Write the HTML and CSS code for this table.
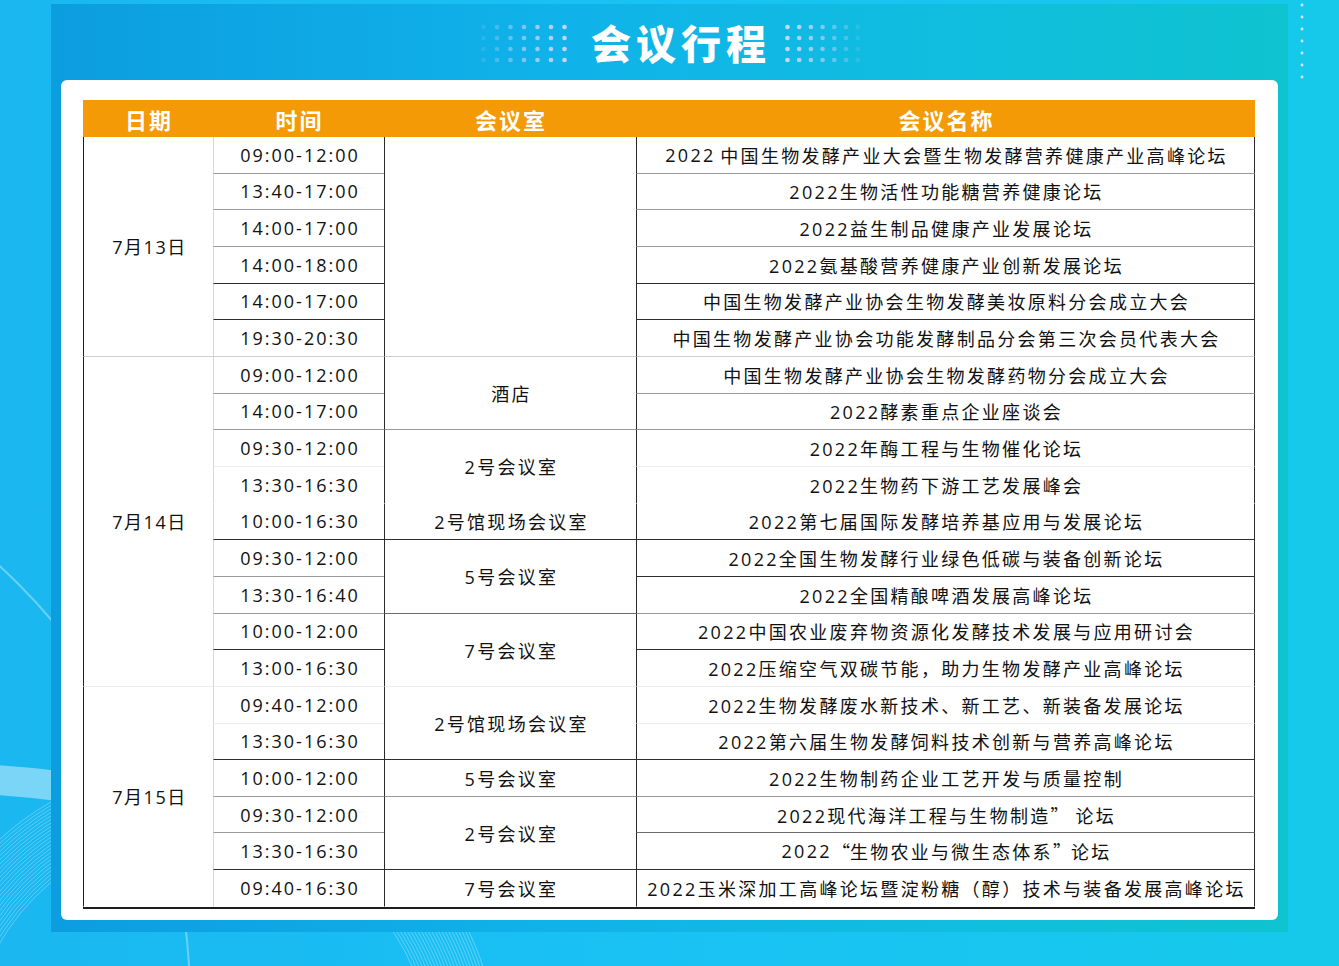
FILE: index.html
```html
<!DOCTYPE html>
<html lang="zh">
<head>
<meta charset="utf-8">
<title>会议行程</title>
<link rel="stylesheet" href="styles.css">
</head>
<body>
<div class="page">
  <svg class="deco" width="1339" height="966" viewBox="0 0 1339 966">
    <path d="M -20 779 Q 150 788 330 850" stroke="#ffffff" stroke-opacity="0.42" stroke-width="30" fill="none"/>
    <g fill="none" stroke="#ffffff" stroke-opacity="0.3" stroke-width="1">
      <circle cx="200" cy="1060" r="232"/><circle cx="200" cy="1060" r="235"/><circle cx="200" cy="1060" r="238"/>
      <circle cx="200" cy="1060" r="241"/><circle cx="200" cy="1060" r="244"/><circle cx="200" cy="1060" r="247"/>
      <circle cx="200" cy="1060" r="250"/><circle cx="200" cy="1060" r="253"/><circle cx="200" cy="1060" r="256"/>
      <circle cx="200" cy="1060" r="259"/><circle cx="200" cy="1060" r="262"/><circle cx="200" cy="1060" r="265"/>
      <circle cx="200" cy="1060" r="268"/><circle cx="200" cy="1060" r="271"/><circle cx="200" cy="1060" r="274"/>
      <circle cx="200" cy="1060" r="277"/><circle cx="200" cy="1060" r="280"/><circle cx="200" cy="1060" r="283"/>
      <circle cx="200" cy="1060" r="286"/><circle cx="200" cy="1060" r="289"/><circle cx="200" cy="1060" r="292"/>
      <circle cx="200" cy="1060" r="295"/><circle cx="200" cy="1060" r="298"/>
    </g>
    <circle cx="-400" cy="1000" r="590" fill="none" stroke="#ffffff" stroke-opacity="0.35" stroke-width="2"/>
    <g fill="#d4ecf6">
      <circle cx="1302" cy="5" r="1.4"/><circle cx="1302" cy="17" r="1.4"/><circle cx="1302" cy="29" r="1.4"/>
      <circle cx="1302" cy="41" r="1.4"/><circle cx="1302" cy="53" r="1.4"/><circle cx="1302" cy="65" r="1.4"/>
      <circle cx="1302" cy="77" r="1.4"/>
    </g>
  </svg>

  <div class="panel">
    <div class="title-row">
      <svg class="dots" width="86" height="40" viewBox="0 0 86 40">
        <g fill="#cbd5fb">
          <g opacity="0.15"><circle cx="2.5" cy="5" r="2.3"/><circle cx="2.5" cy="16" r="2.3"/><circle cx="2.5" cy="27" r="2.3"/><circle cx="2.5" cy="38" r="2.3"/></g>
          <g opacity="0.3"><circle cx="16" cy="5" r="2.3"/><circle cx="16" cy="16" r="2.3"/><circle cx="16" cy="27" r="2.3"/><circle cx="16" cy="38" r="2.3"/></g>
          <g opacity="0.45"><circle cx="29.5" cy="5" r="2.3"/><circle cx="29.5" cy="16" r="2.3"/><circle cx="29.5" cy="27" r="2.3"/><circle cx="29.5" cy="38" r="2.3"/></g>
          <g opacity="0.6"><circle cx="43" cy="5" r="2.3"/><circle cx="43" cy="16" r="2.3"/><circle cx="43" cy="27" r="2.3"/><circle cx="43" cy="38" r="2.3"/></g>
          <g opacity="0.75"><circle cx="56.5" cy="5" r="2.3"/><circle cx="56.5" cy="16" r="2.3"/><circle cx="56.5" cy="27" r="2.3"/><circle cx="56.5" cy="38" r="2.3"/></g>
          <g opacity="0.88"><circle cx="70" cy="5" r="2.3"/><circle cx="70" cy="16" r="2.3"/><circle cx="70" cy="27" r="2.3"/><circle cx="70" cy="38" r="2.3"/></g>
          <g opacity="1"><circle cx="83.5" cy="5" r="2.3"/><circle cx="83.5" cy="16" r="2.3"/><circle cx="83.5" cy="27" r="2.3"/><circle cx="83.5" cy="38" r="2.3"/></g>
        </g>
      </svg>
      <h1 class="title">会议行程</h1>
      <svg class="dots dots-right" width="76" height="40" viewBox="0 0 76 40">
        <g fill="#cbd5fb">
          <g opacity="1"><circle cx="2.5" cy="5" r="2.3"/><circle cx="2.5" cy="16" r="2.3"/><circle cx="2.5" cy="27" r="2.3"/><circle cx="2.5" cy="38" r="2.3"/></g>
          <g opacity="0.88"><circle cx="14.2" cy="5" r="2.3"/><circle cx="14.2" cy="16" r="2.3"/><circle cx="14.2" cy="27" r="2.3"/><circle cx="14.2" cy="38" r="2.3"/></g>
          <g opacity="0.75"><circle cx="25.9" cy="5" r="2.3"/><circle cx="25.9" cy="16" r="2.3"/><circle cx="25.9" cy="27" r="2.3"/><circle cx="25.9" cy="38" r="2.3"/></g>
          <g opacity="0.6"><circle cx="37.6" cy="5" r="2.3"/><circle cx="37.6" cy="16" r="2.3"/><circle cx="37.6" cy="27" r="2.3"/><circle cx="37.6" cy="38" r="2.3"/></g>
          <g opacity="0.45"><circle cx="49.3" cy="5" r="2.3"/><circle cx="49.3" cy="16" r="2.3"/><circle cx="49.3" cy="27" r="2.3"/><circle cx="49.3" cy="38" r="2.3"/></g>
          <g opacity="0.3"><circle cx="61" cy="5" r="2.3"/><circle cx="61" cy="16" r="2.3"/><circle cx="61" cy="27" r="2.3"/><circle cx="61" cy="38" r="2.3"/></g>
          <g opacity="0.15"><circle cx="72.7" cy="5" r="2.3"/><circle cx="72.7" cy="16" r="2.3"/><circle cx="72.7" cy="27" r="2.3"/><circle cx="72.7" cy="38" r="2.3"/></g>
        </g>
      </svg>
    </div>

    <div class="card">
      <div class="schedule">
        <div class="hd">日期</div>
        <div class="hd">时间</div>
        <div class="hd">会议室</div>
        <div class="hd">会议名称</div>

        <!-- 1 -->
        <div class="c date s6 bl">7月13日</div>
        <div class="c time bg">09:00-12:00</div>
        <div class="c room s6 bl"></div>
        <div class="c name bg">2022<span class="sp"> </span>中国生物发酵产业大会暨生物发酵营养健康产业高峰论坛</div>
        <!-- 2 -->
        <div class="c time bg">13:40-17:00</div>
        <div class="c name bg">2022生物活性功能糖营养健康论坛</div>
        <!-- 3 -->
        <div class="c time bg">14:00-17:00</div>
        <div class="c name bg">2022益生制品健康产业发展论坛</div>
        <!-- 4 -->
        <div class="c time bd">14:00-18:00</div>
        <div class="c name bd">2022氨基酸营养健康产业创新发展论坛</div>
        <!-- 5 -->
        <div class="c time bd">14:00-17:00</div>
        <div class="c name bd">中国生物发酵产业协会生物发酵美妆原料分会成立大会</div>
        <!-- 6 -->
        <div class="c time bl">19:30-20:30</div>
        <div class="c name bl">中国生物发酵产业协会功能发酵制品分会第三次会员代表大会</div>
        <!-- 7 -->
        <div class="c date s9 bx">7月14日</div>
        <div class="c time bg">09:00-12:00</div>
        <div class="c room s2 bg">酒店</div>
        <div class="c name bg">中国生物发酵产业协会生物发酵药物分会成立大会</div>
        <!-- 8 -->
        <div class="c time bg">14:00-17:00</div>
        <div class="c name bg">2022酵素重点企业座谈会</div>
        <!-- 9 -->
        <div class="c time bx">09:30-12:00</div>
        <div class="c room s2">2号会议室</div>
        <div class="c name bx">2022年酶工程与生物催化论坛</div>
        <!-- 10 -->
        <div class="c time">13:30-16:30</div>
        <div class="c name">2022生物药下游工艺发展峰会</div>
        <!-- 11 -->
        <div class="c time bd">10:00-16:30</div>
        <div class="c room bd">2号馆现场会议室</div>
        <div class="c name bd">2022第七届国际发酵培养基应用与发展论坛</div>
        <!-- 12 -->
        <div class="c time bg">09:30-12:00</div>
        <div class="c room s2 bm">5号会议室</div>
        <div class="c name bd">2022全国生物发酵行业绿色低碳与装备创新论坛</div>
        <!-- 13 -->
        <div class="c time bg">13:30-16:40</div>
        <div class="c name bg">2022全国精酿啤酒发展高峰论坛</div>
        <!-- 14 -->
        <div class="c time bd">10:00-12:00</div>
        <div class="c room s2 bx">7号会议室</div>
        <div class="c name bd">2022中国农业废弃物资源化发酵技术发展与应用研讨会</div>
        <!-- 15 -->
        <div class="c time bx">13:00-16:30</div>
        <div class="c name bx">2022压缩空气双碳节能，助力生物发酵产业高峰论坛</div>
        <!-- 16 -->
        <div class="c date s6">7月15日</div>
        <div class="c time bx">09:40-12:00</div>
        <div class="c room s2 bd">2号馆现场会议室</div>
        <div class="c name bx">2022生物发酵废水新技术、新工艺、新装备发展论坛</div>
        <!-- 17 -->
        <div class="c time bd">13:30-16:30</div>
        <div class="c name bd">2022第六届生物发酵饲料技术创新与营养高峰论坛</div>
        <!-- 18 -->
        <div class="c time bg">10:00-12:00</div>
        <div class="c room bg">5号会议室</div>
        <div class="c name bg">2022生物制药企业工艺开发与质量控制</div>
        <!-- 19 -->
        <div class="c time bg">09:30-12:00</div>
        <div class="c room s2 bd">2号会议室</div>
        <div class="c name bm">2022现代海洋工程与生物制造<span class="q">”</span>&nbsp;论坛</div>
        <!-- 20 -->
        <div class="c time bd">13:30-16:30</div>
        <div class="c name bd">2022<span class="q">“</span>生物农业与微生态体系<span class="q">”</span>论坛</div>
        <!-- 21 -->
        <div class="c time">09:40-16:30</div>
        <div class="c room">7号会议室</div>
        <div class="c name">2022玉米深加工高峰论坛暨淀粉糖（醇）技术与装备发展高峰论坛</div>
      </div>
    </div>
  </div>
</div>
</body>
</html>
```

FILE: styles.css
```css
* {
  box-sizing: border-box;
}

body {
  margin: 0;
}

.page {
  position: relative;
  width: 1339px;
  height: 966px;
  padding: 4px 51px 0;
  overflow: hidden;
  background: linear-gradient(90deg, #1ab7f1 0%, #19c2f4 50%, #16c9ea 100%);
  font-family: "Open Sans", "Noto Sans CJK SC", sans-serif;
}

.deco {
  position: absolute;
  left: 0;
  top: 0;
}

.panel {
  position: relative;
  height: 928px;
  padding: 0 10px 12px;
  display: flex;
  flex-direction: column;
  background: linear-gradient(90deg, #0c9ddf 0%, #10b2ea 40%, #10bde0 70%, #0fc3cf 100%);
}

.title-row {
  height: 76px;
  display: flex;
  align-items: center;
  justify-content: center;
  padding-left: 3px;
}

.dots {
  display: block;
  margin-right: 24px;
}

.dots-right {
  margin-right: 0;
  margin-left: 14px;
}

.title {
  margin: 0;
  font-family: "Noto Sans CJK SC", sans-serif;
  font-weight: 900;
  font-size: 40px;
  line-height: 1;
  letter-spacing: 5px;
  color: #ffffff;
}

.card {
  height: 840px;
  background: #ffffff;
  border-radius: 6px;
  padding: 20px 23px 0 22px;
}

.schedule {
  display: grid;
  grid-template-columns: 130px 171px 252px 619px;
  grid-template-rows: 37px repeat(21, 36.667px);
  border-bottom: 2px solid #1e1e1e;
}

.hd {
  display: flex;
  align-items: center;
  justify-content: center;
  padding-left: 2px;
  padding-top: 1px;
  background: #f39a06;
  color: #ffffff;
  font-family: "Noto Sans CJK SC", sans-serif;
  font-weight: 700;
  font-size: 22px;
  letter-spacing: 2px;
}

.c {
  display: flex;
  align-items: center;
  justify-content: center;
  padding-left: 2px;
  white-space: pre;
  font-size: 18px;
  color: #111111;
  letter-spacing: 2.3px;
  border-bottom: 1px solid transparent;
}

.sp {
  letter-spacing: 0;
}

.date {
  border-left: 1px solid #1e1e1e;
  letter-spacing: 1.5px;
}

.time {
  border-left: 1px solid #d6d6d6;
  letter-spacing: 2px;
}

.room {
  border-left: 1px solid #2a2a2a;
}

.name {
  border-left: 1px solid #2a2a2a;
  border-right: 1px solid #2a2a2a;
}

.q {
  font-family: "Noto Sans CJK SC", sans-serif;
  font-feature-settings: "fwid" 1;
  letter-spacing: 0;
}

.s2 { grid-row: span 2; }
.s6 { grid-row: span 6; }
.s9 { grid-row: span 9; }

.bd { border-bottom-color: #2e2e2e; }
.bm { border-bottom-color: #6a6a6a; }
.bg { border-bottom-color: #9a9a9a; }
.bl { border-bottom-color: #cfcfcf; }
.bx { border-bottom-color: #ececec; }
```
